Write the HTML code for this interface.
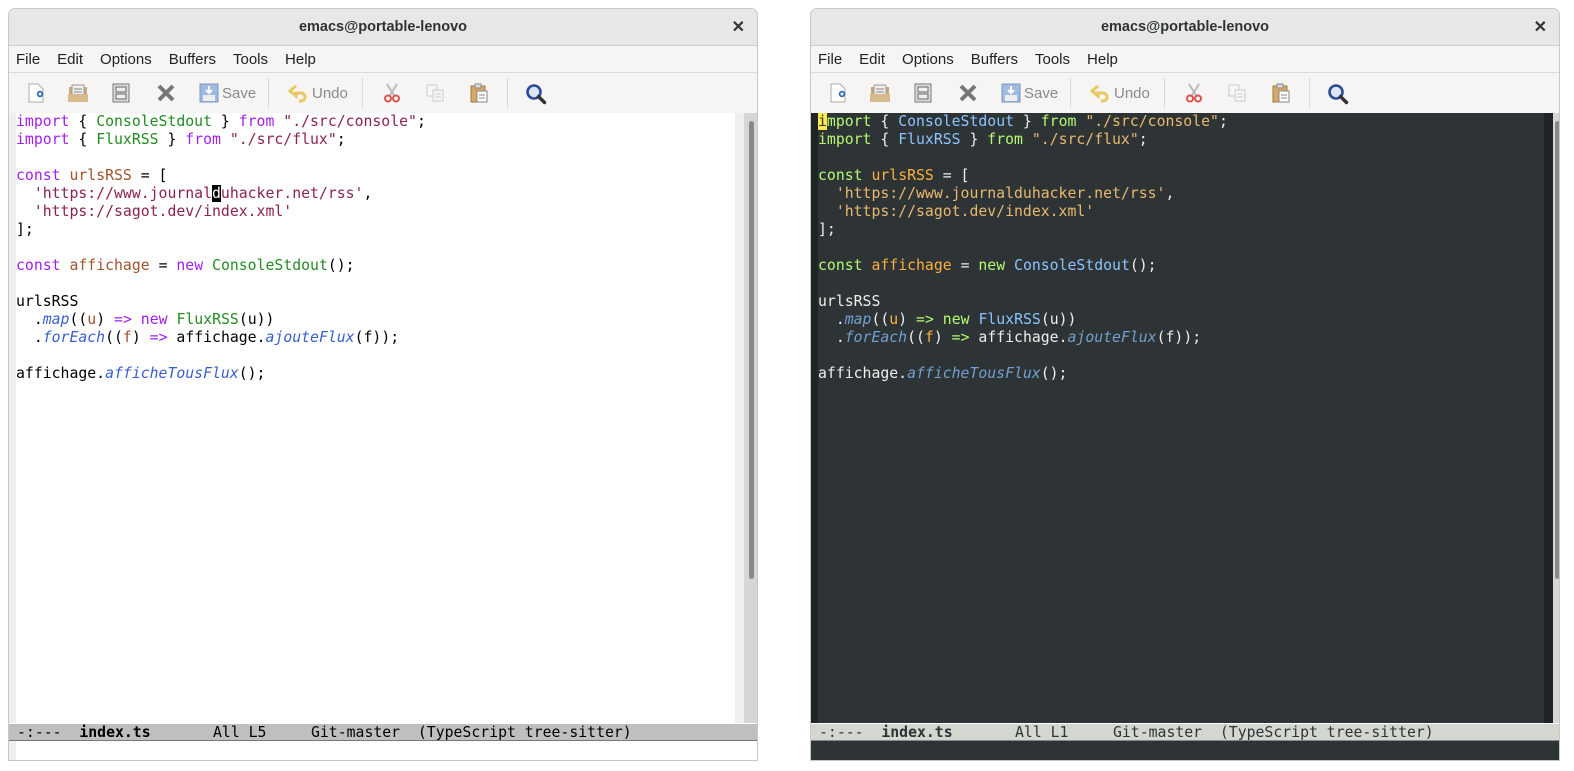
<!DOCTYPE html>
<html><head><meta charset="utf-8"><style>
*{margin:0;padding:0;box-sizing:border-box}
body{width:1574px;height:771px;background:#fff;position:relative;overflow:hidden;font-family:"Liberation Sans",sans-serif}
.win{position:absolute;top:8px;width:750px;height:753px;border:1px solid #c8c8c8;border-radius:7px 7px 0 0;overflow:hidden;background:#f6f5f4}
.title{position:absolute;left:0;top:0;right:0;height:37px;background:#e8e7e5;border-bottom:1px solid #cfcdca;text-align:center;font-size:14.5px;font-weight:bold;color:#2e3436;line-height:37px}
.title .x{position:absolute;right:12px;top:0;font-size:16px;color:#333}
.menu{position:absolute;left:0;top:37px;right:0;height:27px;border-bottom:1px solid #dcdad7;font-size:15px;color:#222;line-height:27px;padding-left:7px}
.menu span{margin-right:17px}
.tb{position:absolute;left:0;top:64px;right:0;height:40px}
.tb svg{position:absolute;top:10px}
.tb .t{position:absolute;top:12px;font-size:15px;color:#8a8a8a}
.tb .sep{position:absolute;top:5px;width:1px;height:30px;background:#dcdad7}
.code{position:absolute;left:0;top:104px;height:610px;font-family:"DejaVu Sans Mono","Liberation Mono",monospace;font-size:14.8px;line-height:18px}
.code .ln{height:18px;white-space:pre;padding-left:0}
.mode{position:absolute;left:0;right:0;top:714px;height:18px;font-family:"DejaVu Sans Mono",monospace;font-size:14.8px;line-height:17px;white-space:pre;padding-left:8px;border-top:1px solid #fff;border-bottom:1px solid #777}
.mini{position:absolute;left:0;right:0;top:732px;height:21px}
.L .code{width:727px;background:#fff;border-left:7px solid #efefef;color:#000}
.L .fr{position:absolute;left:726px;top:104px;width:9px;height:610px;background:#efefef}
.L .sb{position:absolute;left:735px;top:104px;width:14px;height:610px;background:#d6d6d6}
.L .th{position:absolute;left:740px;top:112px;width:5px;height:458px;background:#888;border-radius:3px}
.L .mode{background:#bfbfbf;color:#000}
.L .mini{background:#fff;border-left:7px solid #efefef}
.R .code{width:734px;background:#2e3436;border-left:7px solid #1f2426;color:#eeeeec}
.R .fr{position:absolute;left:733px;top:104px;width:9px;height:629px;background:#1f2426}
.R .sb{position:absolute;left:742px;top:104px;width:8px;height:610px;background:#d6d6d6}
.R .th{position:absolute;left:744px;top:112px;width:5px;height:458px;background:#888;border-radius:3px}
.R .mode{background:#d3d7cf;color:#2e3436;border-bottom-color:#888}
.R .mini{background:#2e3436}
.L .k{color:#a020f0}.L .ty{color:#228b22}.L .s{color:#8b2252}.L .v{color:#a0522d}.L .f{color:#3a5fcd;font-style:italic}
.R .k{color:#b4fa70}.R .ty{color:#8cc4ff}.R .s{color:#e9b96e}.R .v{color:#fcaf3e}.R .f{color:#729fcf;font-style:italic}
.cur{background:#000;color:#fff}
.cury{background:#fce94f;color:#2e3436}
</style></head><body>

<!-- LEFT -->
<div class="win L" style="left:8px">
<div class="title">emacs@portable-lenovo<span class="x">✕</span></div>
<div class="menu"><span>File</span><span>Edit</span><span>Options</span><span>Buffers</span><span>Tools</span><span>Help</span></div>
<div class="tb">
<svg style="left:17px" width="20" height="20" viewBox="0 0 20 20"><path d="M3 1h9l5 5v13H3z" fill="#fff" stroke="#aaa"/><circle cx="14" cy="11" r="3.2" fill="#2a64b8"/><path d="M14 9.3v3.4M12.3 11h3.4" stroke="#fff" stroke-width="1.2"/></svg>
<svg style="left:58px" width="22" height="20" viewBox="0 0 22 20"><path d="M2 4h18v15H2z" fill="#c9a97a"/><path d="M5 2h12v12H5z" fill="#eee" stroke="#999"/><path d="M7 6h8M7 9h8M7 12h8" stroke="#888"/><path d="M1 11h20v8H1z" fill="#d8bb8c"/></svg>
<svg style="left:102px" width="20" height="20" viewBox="0 0 20 20"><rect x="2" y="1" width="16" height="18" fill="#ddd" stroke="#777"/><rect x="5" y="4" width="10" height="5" fill="#eee" stroke="#666"/><rect x="5" y="11" width="10" height="5" fill="#eee" stroke="#666"/></svg>
<svg style="left:147px" width="20" height="20" viewBox="0 0 20 20"><path d="M3 3l14 14M17 3L3 17" stroke="#777" stroke-width="4"/></svg>
<svg style="left:190px" width="20" height="20" viewBox="0 0 20 20"><rect x="1" y="1" width="18" height="18" fill="#9fbbe0" stroke="#7896c0"/><rect x="4" y="12" width="12" height="6" fill="#eee"/><path d="M10 3v7M7 7l3 3 3-3" stroke="#fff" stroke-width="2" fill="none"/></svg>
<span class="t" style="left:213px">Save</span>
<div class="sep" style="left:259px"></div>
<svg style="left:279px" width="20" height="20" viewBox="0 0 20 20"><path d="M8 3L2 8l6 5V10h5a4 4 0 010 8h-2" fill="none" stroke="#e8c860" stroke-width="3"/></svg>
<span class="t" style="left:303px">Undo</span>
<div class="sep" style="left:353px"></div>
<svg style="left:373px" width="20" height="20" viewBox="0 0 20 20"><path d="M5 1l8 13M15 1L7 14" stroke="#bbb" stroke-width="2"/><circle cx="6" cy="15.5" r="3" fill="none" stroke="#d9534f" stroke-width="2"/><circle cx="14" cy="15.5" r="3" fill="none" stroke="#d9534f" stroke-width="2"/></svg>
<svg style="left:416px" width="20" height="20" viewBox="0 0 20 20"><rect x="2" y="2" width="10" height="11" fill="#f6f6f6" stroke="#ccc"/><rect x="8" y="7" width="10" height="11" fill="#f6f6f6" stroke="#ccc"/><path d="M10 11h6M10 14h6" stroke="#ccc"/></svg>
<svg style="left:460px" width="20" height="20" viewBox="0 0 20 20"><rect x="2" y="3" width="14" height="16" fill="#d7a968" stroke="#a07840"/><rect x="6" y="1" width="6" height="4" fill="#ddd" stroke="#888"/><rect x="8" y="8" width="10" height="11" fill="#fff" stroke="#888"/><path d="M10 12h6M10 15h6" stroke="#888"/></svg>
<div class="sep" style="left:498px"></div>
<svg style="left:516px" width="22" height="22" viewBox="0 0 22 22"><circle cx="9" cy="9" r="6.5" fill="#dde6f5" stroke="#2a4d9b" stroke-width="2.6"/><path d="M13.5 13.5l6 6" stroke="#333" stroke-width="3.4" stroke-linecap="round"/></svg>
</div>
<div class="code"><div class="ln"><span class="k">import</span> { <span class="ty">ConsoleStdout</span> } <span class="k">from</span> <span class="s">"./src/console"</span>;</div><div class="ln"><span class="k">import</span> { <span class="ty">FluxRSS</span> } <span class="k">from</span> <span class="s">"./src/flux"</span>;</div><div class="ln"> </div><div class="ln"><span class="k">const</span> <span class="v">urlsRSS</span> = [</div><div class="ln">  <span class="s">'https://www.journal</span><span class="cur">d</span><span class="s">uhacker.net/rss'</span>,</div><div class="ln">  <span class="s">'https://sagot.dev/index.xml'</span></div><div class="ln">];</div><div class="ln"> </div><div class="ln"><span class="k">const</span> <span class="v">affichage</span> = <span class="k">new</span> <span class="ty">ConsoleStdout</span>();</div><div class="ln"> </div><div class="ln">urlsRSS</div><div class="ln">  .<span class="f">map</span>((<span class="v">u</span>) <span class="k">=&gt;</span> <span class="k">new</span> <span class="ty">FluxRSS</span>(u))</div><div class="ln">  .<span class="f">forEach</span>((<span class="v">f</span>) <span class="k">=&gt;</span> affichage.<span class="f">ajouteFlux</span>(f));</div><div class="ln"> </div><div class="ln">affichage.<span class="f">afficheTousFlux</span>();</div></div>
<div class="fr"></div><div class="sb"></div><div class="th"></div>
<div class="mode">-:---  <b>index.ts</b>       All L5     Git-master  (TypeScript tree-sitter)</div>
<div class="mini"></div>
</div>

<!-- RIGHT -->
<div class="win R" style="left:810px">
<div class="title">emacs@portable-lenovo<span class="x">✕</span></div>
<div class="menu"><span>File</span><span>Edit</span><span>Options</span><span>Buffers</span><span>Tools</span><span>Help</span></div>
<div class="tb">
<svg style="left:17px" width="20" height="20" viewBox="0 0 20 20"><path d="M3 1h9l5 5v13H3z" fill="#fff" stroke="#aaa"/><circle cx="14" cy="11" r="3.2" fill="#2a64b8"/><path d="M14 9.3v3.4M12.3 11h3.4" stroke="#fff" stroke-width="1.2"/></svg>
<svg style="left:58px" width="22" height="20" viewBox="0 0 22 20"><path d="M2 4h18v15H2z" fill="#c9a97a"/><path d="M5 2h12v12H5z" fill="#eee" stroke="#999"/><path d="M7 6h8M7 9h8M7 12h8" stroke="#888"/><path d="M1 11h20v8H1z" fill="#d8bb8c"/></svg>
<svg style="left:102px" width="20" height="20" viewBox="0 0 20 20"><rect x="2" y="1" width="16" height="18" fill="#ddd" stroke="#777"/><rect x="5" y="4" width="10" height="5" fill="#eee" stroke="#666"/><rect x="5" y="11" width="10" height="5" fill="#eee" stroke="#666"/></svg>
<svg style="left:147px" width="20" height="20" viewBox="0 0 20 20"><path d="M3 3l14 14M17 3L3 17" stroke="#777" stroke-width="4"/></svg>
<svg style="left:190px" width="20" height="20" viewBox="0 0 20 20"><rect x="1" y="1" width="18" height="18" fill="#9fbbe0" stroke="#7896c0"/><rect x="4" y="12" width="12" height="6" fill="#eee"/><path d="M10 3v7M7 7l3 3 3-3" stroke="#fff" stroke-width="2" fill="none"/></svg>
<span class="t" style="left:213px">Save</span>
<div class="sep" style="left:259px"></div>
<svg style="left:279px" width="20" height="20" viewBox="0 0 20 20"><path d="M8 3L2 8l6 5V10h5a4 4 0 010 8h-2" fill="none" stroke="#e8c860" stroke-width="3"/></svg>
<span class="t" style="left:303px">Undo</span>
<div class="sep" style="left:353px"></div>
<svg style="left:373px" width="20" height="20" viewBox="0 0 20 20"><path d="M5 1l8 13M15 1L7 14" stroke="#bbb" stroke-width="2"/><circle cx="6" cy="15.5" r="3" fill="none" stroke="#d9534f" stroke-width="2"/><circle cx="14" cy="15.5" r="3" fill="none" stroke="#d9534f" stroke-width="2"/></svg>
<svg style="left:416px" width="20" height="20" viewBox="0 0 20 20"><rect x="2" y="2" width="10" height="11" fill="#f6f6f6" stroke="#ccc"/><rect x="8" y="7" width="10" height="11" fill="#f6f6f6" stroke="#ccc"/><path d="M10 11h6M10 14h6" stroke="#ccc"/></svg>
<svg style="left:460px" width="20" height="20" viewBox="0 0 20 20"><rect x="2" y="3" width="14" height="16" fill="#d7a968" stroke="#a07840"/><rect x="6" y="1" width="6" height="4" fill="#ddd" stroke="#888"/><rect x="8" y="8" width="10" height="11" fill="#fff" stroke="#888"/><path d="M10 12h6M10 15h6" stroke="#888"/></svg>
<div class="sep" style="left:498px"></div>
<svg style="left:516px" width="22" height="22" viewBox="0 0 22 22"><circle cx="9" cy="9" r="6.5" fill="#dde6f5" stroke="#2a4d9b" stroke-width="2.6"/><path d="M13.5 13.5l6 6" stroke="#333" stroke-width="3.4" stroke-linecap="round"/></svg>
</div>
<div class="code"><div class="ln"><span class="cury">i</span><span class="k">mport</span> { <span class="ty">ConsoleStdout</span> } <span class="k">from</span> <span class="s">"./src/console"</span>;</div><div class="ln"><span class="k">import</span> { <span class="ty">FluxRSS</span> } <span class="k">from</span> <span class="s">"./src/flux"</span>;</div><div class="ln"> </div><div class="ln"><span class="k">const</span> <span class="v">urlsRSS</span> = [</div><div class="ln">  <span class="s">'https://www.journalduhacker.net/rss'</span>,</div><div class="ln">  <span class="s">'https://sagot.dev/index.xml'</span></div><div class="ln">];</div><div class="ln"> </div><div class="ln"><span class="k">const</span> <span class="v">affichage</span> = <span class="k">new</span> <span class="ty">ConsoleStdout</span>();</div><div class="ln"> </div><div class="ln">urlsRSS</div><div class="ln">  .<span class="f">map</span>((<span class="v">u</span>) <span class="k">=&gt;</span> <span class="k">new</span> <span class="ty">FluxRSS</span>(u))</div><div class="ln">  .<span class="f">forEach</span>((<span class="v">f</span>) <span class="k">=&gt;</span> affichage.<span class="f">ajouteFlux</span>(f));</div><div class="ln"> </div><div class="ln">affichage.<span class="f">afficheTousFlux</span>();</div></div>
<div class="fr"></div><div class="sb"></div><div class="th"></div>
<div class="mode">-:---  <b>index.ts</b>       All L1     Git-master  (TypeScript tree-sitter)</div>
<div class="mini"></div>
</div>
</body></html>
